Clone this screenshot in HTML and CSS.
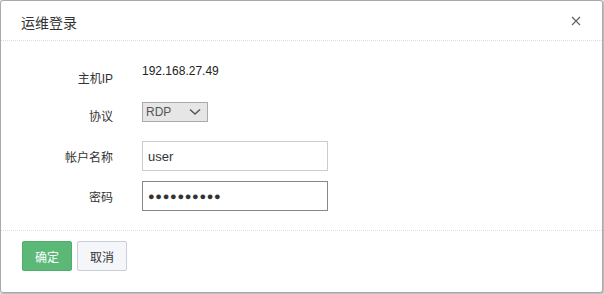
FILE: index.html
```html
<!DOCTYPE html>
<html>
<head>
<meta charset="utf-8">
<link rel="stylesheet" href="styles.css">
</head>
<body>
<div class="dialog">
  <div class="header">
    <span class="title">运维登录</span>
    <svg class="close" width="10" height="10" viewBox="0 0 10 10"><path d="M1 1 L9 9 M9 1 L1 9" stroke="#666" stroke-width="1.3" fill="none"/></svg>
  </div>
  <div class="body">
    <div class="row row-ip">
      <div class="label">主机IP</div>
      <div class="value">192.168.27.49</div>
    </div>
    <div class="row row-proto">
      <div class="label">协议</div>
      <div class="select"><span>RDP</span>
        <svg width="12" height="8" viewBox="0 0 12 8"><path d="M1 1.5 L6 6 L11 1.5" fill="none" stroke="#555" stroke-width="1.5"/></svg>
      </div>
    </div>
    <div class="row row-input">
      <div class="label">帐户名称</div>
      <div class="input">user</div>
    </div>
    <div class="row row-input">
      <div class="label">密码</div>
      <div class="input focus pw">●●●●●●●●●●</div>
    </div>
  </div>
  <div class="footer">
    <button class="btn ok">确定</button>
    <button class="btn cancel">取消</button>
  </div>
</div>
</body>
</html>
```
FILE: styles.css
```css
html, body {
  margin: 0;
  padding: 0;
  background: #e8e8e8;
}
body {
  width: 604px;
  height: 294px;
  font-family: "Liberation Sans", "Noto Sans CJK SC", sans-serif;
  font-size: 12px;
  color: #333;
}
.dialog {
  box-sizing: border-box;
  width: 603px;
  height: 293px;
  background: #fff;
  border: 1px solid #a9a9a9;
  border-radius: 3px;
  box-shadow: 1px 1px 2px rgba(0,0,0,0.25);
  display: flex;
  flex-direction: column;
}
.header {
  height: 39px;
  border-bottom: 1px dotted #ddd;
  display: flex;
  align-items: center;
  justify-content: space-between;
  padding: 0 21px 0 20px;
}
.title {
  font-size: 14px;
  color: #333;
  padding-top: 2px;
}
.close {
  margin-top: 1px;
}
.body {
  height: 190px;
  padding-top: 20px;
  box-sizing: border-box;
  border-bottom: 1px dotted #ddd;
}
.row {
  display: flex;
  align-items: center;
}
.label {
  width: 112px;
  text-align: right;
  margin-right: 29px;
  color: #333;
}
.row-ip {
  height: 22px;
  margin-bottom: 17px;
}
.row-ip .label { padding-top: 10px; }
.row-ip .value { font-size: 12px; color: #222; margin-top: -2px; }
.row-proto {
  height: 22px;
  margin-bottom: 19px;
}
.row-proto .label { padding-top: 9px; }
.select {
  box-sizing: border-box;
  width: 66px;
  height: 20px;
  border: 1px solid #aaa;
  background: #e6e6e6;
  display: flex;
  align-items: center;
  justify-content: space-between;
  padding: 0 6px 0 3px;
  color: #555;
  font-size: 12px;
  margin-top: 2px;
}
.row-input {
  height: 30px;
  margin-bottom: 10px;
}
.input {
  box-sizing: border-box;
  width: 186px;
  height: 30px;
  border: 1px solid #ccc;
  padding: 0 5px;
  display: flex;
  align-items: center;
  font-size: 13px;
  color: #333;
}
.input.focus {
  border-color: #888;
}
.pw {
  font-size: 11px;
  letter-spacing: 0.7px;
  color: #333;
}
.footer {
  display: flex;
  padding: 10px 0 0 21px;
  gap: 5px;
}
.btn {
  box-sizing: border-box;
  width: 50px;
  height: 30px;
  border-radius: 2px;
  font-family: "Liberation Sans", "Noto Sans CJK SC", sans-serif;
  font-size: 12px;
  padding: 0;
  cursor: pointer;
}
.ok {
  background: #5cb877;
  border: 1px solid #52ad6c;
  color: #fff;
}
.cancel {
  background: #f4f6fa;
  border: 1px solid #c9ced8;
  color: #333;
}
```
